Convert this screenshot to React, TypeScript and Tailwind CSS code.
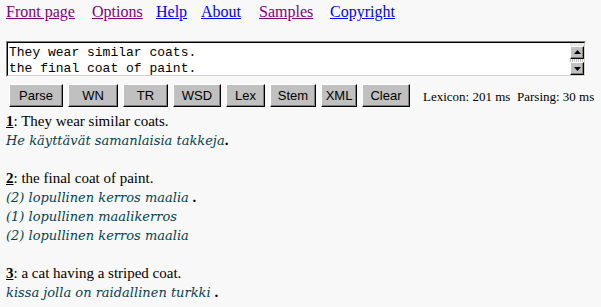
import React from "react";

const serif = { fontFamily: '"Liberation Serif", "Times New Roman", serif' };

function NavLink({ label, visited, w }: { label: string; visited?: boolean; w?: string }) {
  return (
    <span className={`inline-block ${w ?? ""}`}>
      <a className={`underline ${visited ? "text-[#800080]" : "text-[#0000ff]"}`} href="#">
        {label}
      </a>
    </span>
  );
}

function Btn({ label, w }: { label: string; w: string }) {
  return (
    <div
      className={`${w} h-[23px] flex items-center justify-center bg-[#c0c0c0] border-t border-l border-t-white border-l-white border-b border-r border-b-black border-r-black shadow-[inset_-1px_-1px_0_#808080] text-[13px] text-black`}
      style={{ fontFamily: '"Liberation Sans", Arial, sans-serif' }}
    >
      {label}
    </div>
  );
}

function Fi({ children }: { children: React.ReactNode }) {
  return (
    <span className="italic text-[#034250]" style={{ fontFamily: '"DejaVu Serif", serif', fontSize: "13px" }}>
      {children}
    </span>
  );
}

function Dot() {
  return <b className="text-black">.</b>;
}

export default function App() {
  return (
    <div className="w-[601px] h-[307px] bg-[#f8f8f8] overflow-hidden text-black" style={serif}>
      <div className="pl-[6px] pt-[3px] text-[16px] leading-[18px] flex">
        <NavLink label="Front page" visited w="w-[86px]" />
        <NavLink label="Options" visited w="w-[64px]" />
        <NavLink label="Help" w="w-[45px]" />
        <NavLink label="About" w="w-[58px]" />
        <NavLink label="Samples" visited w="w-[71px]" />
        <NavLink label="Copyright" />
      </div>

      <div className="ml-[6px] mt-[20px] w-[580px] h-[36px] border-t border-l border-t-[#808080] border-l-[#808080] border-b border-r border-b-white border-r-white">
        <div className="w-full h-full flex bg-white border-t border-l border-t-black border-l-black border-b border-r border-b-[#d4d0c8] border-r-[#d4d0c8]">
          <div
            className="flex-1 pl-[1px] pt-[2px] text-[13px] leading-[16px] whitespace-pre"
            style={{ fontFamily: '"Liberation Mono", "Courier New", monospace' }}
          >
            <div>They wear similar coats.</div>
            <div>the final coat of paint.</div>
          </div>
          <div className="w-[14px] flex flex-col pt-[3px] bg-[#e8e8e8]">
            <div className="h-[13px] bg-[#c0c0c0] border-t border-l border-t-white border-l-white border-b border-r border-b-black border-r-black shadow-[inset_-1px_-1px_0_#808080] flex items-center justify-center">
              <svg width="7" height="4" viewBox="0 0 7 4"><path d="M3.5 0 L7 4 L0 4 Z" fill="black" /></svg>
            </div>
            <div className="h-[4px] bg-[repeating-linear-gradient(90deg,#c0c0c0_0_1px,#ffffff_1px_2px)]" />
            <div className="h-[13px] bg-[#c0c0c0] border-t border-l border-t-white border-l-white border-b border-r border-b-black border-r-black shadow-[inset_-1px_-1px_0_#808080] flex items-center justify-center">
              <svg width="7" height="4" viewBox="0 0 7 4"><path d="M0 0 L7 0 L3.5 4 Z" fill="black" /></svg>
            </div>
          </div>
        </div>
      </div>

      <div className="flex items-center mt-[7px] pl-[9px] gap-[5px]">
        <Btn label="Parse" w="w-[54px]" />
        <Btn label="WN" w="w-[50px]" />
        <Btn label="TR" w="w-[45px]" />
        <Btn label="WSD" w="w-[48px]" />
        <Btn label="Lex" w="w-[39px]" />
        <Btn label="Stem" w="w-[46px]" />
        <Btn label="XML" w="w-[36px]" />
        <Btn label="Clear" w="w-[48px]" />
        <div className="ml-[8px] pt-[2px] text-[13px] flex">
          <span className="w-[94px]">Lexicon: 201 ms</span>
          <span>Parsing: 30 ms</span>
        </div>
      </div>

      <div className="pl-[6px] mt-[5px] text-[15px] leading-[19px]">
        <div>
          <b className="underline">1</b>: They wear similar coats.
        </div>
        <div>
          <Fi>He käyttävät samanlaisia takkeja</Fi>
          <Dot />
        </div>
        <div className="h-[19px]" />
        <div>
          <b className="underline">2</b>: the final coat of paint.
        </div>
        <div>
          <Fi>(2) lopullinen kerros maalia</Fi> <Dot />
        </div>
        <div>
          <Fi>(1) lopullinen maalikerros</Fi>
        </div>
        <div>
          <Fi>(2) lopullinen kerros maalia</Fi>
        </div>
        <div className="h-[19px]" />
        <div>
          <b className="underline">3</b>: a cat having a striped coat.
        </div>
        <div>
          <Fi>kissa jolla on raidallinen turkki</Fi> <Dot />
        </div>
      </div>
    </div>
  );
}
